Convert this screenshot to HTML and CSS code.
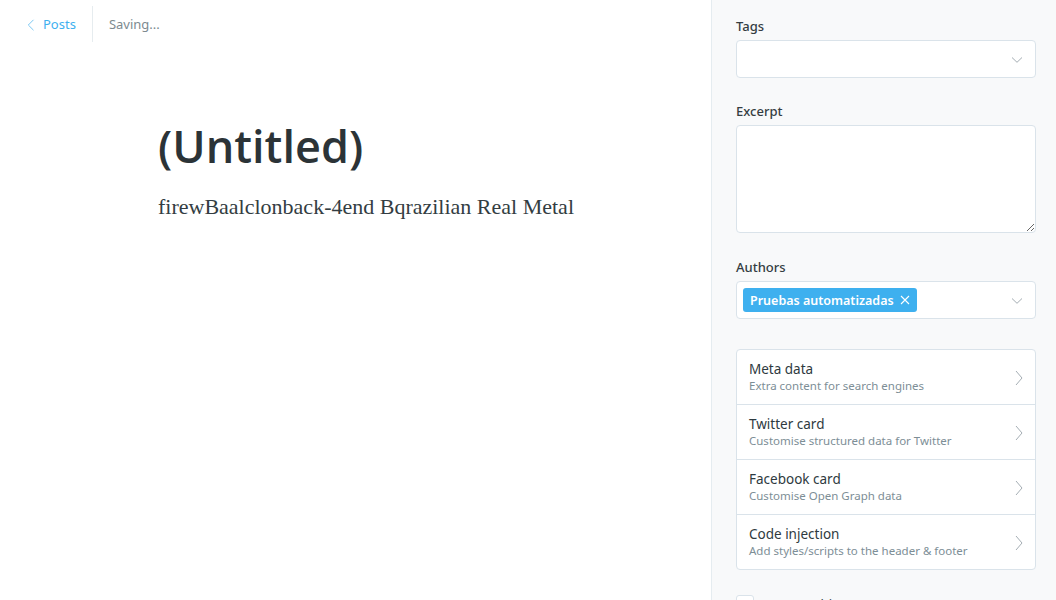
FILE: index.html
```html
<!DOCTYPE html>
<html>
<head>
<meta charset="utf-8">
<link rel="stylesheet" href="styles.css">
</head>
<body>
<div class="app">
  <main class="editor">
    <header class="topbar">
      <a class="back" href="#">
        <svg class="back-icon" width="8" height="12" viewBox="0 0 8 12"><path d="M6.5 0.8 L1.3 6 L6.5 11.2" fill="none" stroke="#7cc8f2" stroke-width="1"/></svg>
        <span>Posts</span>
      </a>
      <span class="divider"></span>
      <span class="status">Saving...</span>
    </header>
    <article class="content">
      <h1 class="title">(Untitled)</h1>
      <p class="body-text">firewBaalclonback-4end Bqrazilian Real Metal</p>
    </article>
  </main>
  <aside class="sidebar">
    <div class="field">
      <label class="label">Tags</label>
      <div class="select">
        <svg class="caret" width="12" height="8" viewBox="0 0 12 8"><path d="M1 1.5 L6 6.3 L11 1.5" fill="none" stroke="#a4adb3" stroke-width="1"/></svg>
      </div>
    </div>
    <div class="field field-excerpt">
      <label class="label">Excerpt</label>
      <textarea class="textarea"></textarea>
    </div>
    <div class="field">
      <label class="label">Authors</label>
      <div class="select">
        <span class="pill">Pruebas automatizadas <svg class="pill-x" width="10" height="10" viewBox="0 0 10 10"><path d="M1 1 L9 9 M9 1 L1 9" stroke="#fff" stroke-width="1.1"/></svg></span>
        <svg class="caret" width="12" height="8" viewBox="0 0 12 8"><path d="M1 1.5 L6 6.3 L11 1.5" fill="none" stroke="#a4adb3" stroke-width="1"/></svg>
      </div>
    </div>
    <ul class="menu">
      <li class="menu-item"><div><div class="menu-title">Meta data</div><div class="menu-sub">Extra content for search engines</div></div><svg class="chev" width="8" height="16" viewBox="0 0 8 16"><path d="M1 1 L7 8 L1 15" fill="none" stroke="#a4adb3" stroke-width="1"/></svg></li>
      <li class="menu-item"><div><div class="menu-title">Twitter card</div><div class="menu-sub">Customise structured data for Twitter</div></div><svg class="chev" width="8" height="16" viewBox="0 0 8 16"><path d="M1 1 L7 8 L1 15" fill="none" stroke="#a4adb3" stroke-width="1"/></svg></li>
      <li class="menu-item"><div><div class="menu-title">Facebook card</div><div class="menu-sub">Customise Open Graph data</div></div><svg class="chev" width="8" height="16" viewBox="0 0 8 16"><path d="M1 1 L7 8 L1 15" fill="none" stroke="#a4adb3" stroke-width="1"/></svg></li>
      <li class="menu-item"><div><div class="menu-title">Code injection</div><div class="menu-sub">Add styles/scripts to the header &amp; footer</div></div><svg class="chev" width="8" height="16" viewBox="0 0 8 16"><path d="M1 1 L7 8 L1 15" fill="none" stroke="#a4adb3" stroke-width="1"/></svg></li>
    </ul>
    <div class="check-row">
      <span class="checkbox"></span>
      <span class="check-label">Feature this post</span>
    </div>
  </aside>
</div>
</body>
</html>
```

FILE: styles.css
```css
* { box-sizing: border-box; }
html, body { margin: 0; padding: 0; height: 100%; overflow: hidden; }
body {
  font-family: "Noto Sans", "Open Sans", sans-serif;
  color: #2e3a40;
  background: #fff;
}
.app { display: flex; height: 600px; }
.editor { flex: 1; min-width: 0; }
.topbar {
  display: flex;
  align-items: center;
  height: 48px;
  padding: 0 0 0 27px;
}
.back {
  display: flex;
  align-items: center;
  gap: 8px;
  color: #3eb0ef;
  text-decoration: none;
  font-size: 13px;
}
.back-icon { margin-top: 1px; }
.divider {
  width: 1px;
  height: 36px;
  background: #e6ecef;
  margin: 0 17px 0 16px;
}
.status { font-size: 13px; color: #7d8a90; margin-left: -1px; }
.content { padding: 70px 0 0 158px; }
.title {
  margin: 0;
  font-family: "Open Sans", "Noto Sans", sans-serif;
  font-size: 45px;
  font-weight: 600;
  color: #2b3337;
  line-height: 56px;
  letter-spacing: 0;
}
.body-text {
  margin: 20px 0 0;
  font-family: "Liberation Serif", "Times New Roman", serif;
  font-size: 22px;
  color: #333d42;
}
.sidebar {
  width: 345px;
  flex: none;
  background: #f8f9fa;
  border-left: 1px solid #e5ecf0;
  padding: 16px 20px 0 24px;
}
.field { margin-bottom: 23px; }
.field-excerpt { margin-bottom: 24px; }
.label {
  display: block;
  font-size: 13px;
  font-weight: 500;
  color: #343d42;
  line-height: 20px;
  margin-bottom: 4px;
}
.select {
  position: relative;
  height: 38px;
  background: #fff;
  border: 1px solid #dae3ea;
  border-radius: 4px;
  display: flex;
  align-items: center;
  padding: 0 6px;
}
.caret { position: absolute; right: 12px; top: 15px; }
.textarea {
  display: block;
  width: 100%;
  height: 108px;
  border: 1px solid #dae3ea;
  border-radius: 4px;
  background: #fff;
  resize: vertical;
  font: inherit;
}
.pill {
  display: inline-flex;
  align-items: center;
  gap: 6px;
  height: 24px;
  padding: 0 7px;
  background: #3eb0ef;
  color: #fff;
  border-radius: 3px;
  font-size: 12.5px;
  font-weight: 600;
}
.menu {
  list-style: none;
  margin: 30px 0 0;
  padding: 0;
  background: #fff;
  border: 1px solid #dae3ea;
  border-radius: 4px;
}
.menu-item {
  display: flex;
  align-items: center;
  justify-content: space-between;
  height: 55px;
  padding: 0 12px 0 12px;
  border-top: 1px solid #dae3ea;
}
.menu-item:first-child { border-top: none; height: 54px; }
.menu-title { font-size: 13.5px; color: #2e3a40; line-height: 18px; }
.menu-sub { font-size: 11.5px; color: #7d8e96; line-height: 16px; }
.chev { margin-top: 2px; }
.check-row {
  display: flex;
  align-items: flex-start;
  gap: 12px;
  margin-top: 25px;
  padding-left: 0;
}
.checkbox {
  width: 18px;
  height: 18px;
  background: #fff;
  border: 1px solid #dae3ea;
  border-radius: 3px;
}
.check-label { font-size: 13px; color: #343d42; }
```
